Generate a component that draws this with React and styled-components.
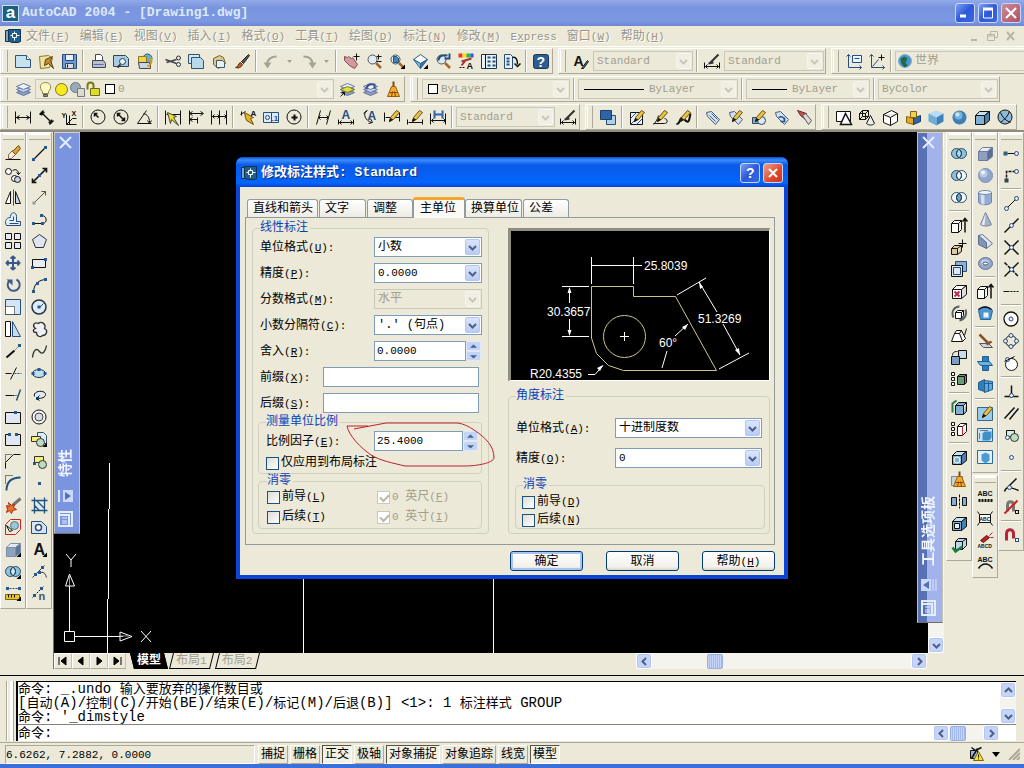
import React, { useState } from "react";
import styled, { createGlobalStyle, css } from "styled-components";

const MONO = `"Liberation Mono", "Noto Sans CJK SC", monospace`;
const FACE = "#ece9d8";
const SHADOW = "#aca899";

const GlobalStyle = createGlobalStyle`
  * { box-sizing: border-box; }
  body { margin: 0; background: ${FACE}; font: 12px/14px ${MONO}; color: #000; }
  button, input, select { font: inherit; color: inherit; margin: 0; padding: 0; }
  svg { display: block; flex: none; }
`;

const Latin = styled.span`
  font-size: 11px;
`;

// "&" marks the access key, as in Windows resource files
function Caption({ text }) {
  return text.split(/([ -~]+)/).map((part, i) =>
    i % 2 ? (
      <Latin key={i}>{part.split(/&(.)/).map((p, j) => (j % 2 ? <u key={j}>{p}</u> : p))}</Latin>
    ) : (
      part
    )
  );
}

/* ---------- icons ---------- */

const cube = (front, top, side) => (
  <>
    <path d="M1 6h9v9H1z" fill={front} />
    <path d="M1 6l4-4h10l-5 4z" fill={top} />
    <path d="M10 6l5-4v9l-5 4z" fill={side} />
  </>
);
const wire = cube("#fff", "#fff", "#ddd");
const blueCube = cube("#7fb0d6", "#c8e2f4", "#4b7fae");
const rings = (a, b, c) => (
  <>
    <circle cx="5" cy="8" r="5" fill={a} stroke="none" />
    <circle cx="10" cy="8" r="5" fill={b} stroke="none" />
    <path d="M7.500 3.700a5 5 0 0 1 0 8.600a5 5 0 0 1 0-8.600z" fill={c} />
    <g stroke="#24506e">
      <circle cx="5" cy="8" r="5" />
      <circle cx="10" cy="8" r="5" />
    </g>
  </>
);
const pencil = (
  <g>
    <path d="M5 12l1-4 6-7 3 2-6 7z" fill="#e8c34a" stroke="#6b4c12" />
    <path d="M5 12l1-3 2 1z" fill="#222" />
  </g>
);
const dot = (x, y) => <rect x={x - 1.5} y={y - 1.5} width="3" height="3" fill="#245a94" stroke="none" />;
const ring = (x, y, r = 2) => <circle cx={x} cy={y} r={r} fill="#e3edf7" stroke="#2d4a78" />;
const corner = <path d="M15.500 11v4.500H11z" fill="#000" stroke="none" />;
const letter = (t, x, y, size = 12, fill = "#111") => (
  <text x={x} y={y} fontSize={size} fill={fill} stroke="none" fontFamily="Liberation Sans, sans-serif" fontWeight="bold">{t}</text>
);
const lens = (
  <>
    <path d="M9.500 9.500l5 5" stroke="#a5682a" strokeWidth="2.500" />
    <circle cx="6" cy="6" r="4.500" fill="#dcebf5" stroke="#555" />
  </>
);
const stack = (
  <>
    <path d="M1 11l7 3 7-3-7-3z" fill="#8fa0c8" stroke="#6273a0" />
    <path d="M1 8l7 3 7-3-7-3z" fill="#c8d2ea" stroke="#6273a0" />
    <path d="M1 5l7 3 7-3-7-3z" fill="#eef2fb" stroke="#6273a0" />
  </>
);
const broom = (
  <>
    <path d="M8 0v6" stroke="#7a4a10" strokeWidth="2" />
    <path d="M6 5h4l4 10H2z" fill="#f0ad27" stroke="#9a5d0c" />
    <path d="M4 11h8M6 15l1-5M10 15l-1-5" stroke="#9a3d0c" />
  </>
);
const tag = <path d="M2 3l5-1 8 8-4 5-8-8z" fill="#cfe0ee" stroke="#48607e" />;
const sphere = (
  <>
    <circle cx="8" cy="8" r="7" fill="#8fa6cc" stroke="#7b8fb5" />
    <circle cx="6" cy="6" r="4" fill="#b9c8e4" stroke="none" />
    <circle cx="5.500" cy="5" r="2" fill="#eff4fc" stroke="none" />
  </>
);

const ICONS = {
  new: <><path d="M0 2h11l4 4v8H0z" fill="#c6e2ee" stroke="#2e5575" /><path d="M11 2v4h4" fill="#fff" stroke="#2e5575" /></>,
  open: <><path d="M1 3l9-1 4 3-3 9-9 1z" fill="#f0e3a0" stroke="#8d7a38" /><path d="M7 6l7-3-2 4 3 8-5-5-4 2z" fill="#c18a2c" stroke="#5a4012" /></>,
  save: <><path d="M1 1h14v14H1z" fill="#6f9bd0" stroke="#294a7c" /><path d="M4 1h8v6H4z" fill="#e8eff7" stroke="#294a7c" /><path d="M4 10h8v5H4z" fill="#dcdcdc" stroke="#294a7c" /><path d="M6 11v3" /></>,
  print: <><path d="M5 7V1h5l2 2v4" fill="#fff" stroke="#445" /><path d="M2 7h11l2 3v4H2z" fill="#b9bfce" stroke="#445" /><path d="M3 11h10" stroke="#5d6cb0" /></>,
  preview: <><path d="M0 2h12l3 3v8H0z" fill="#a9cbe6" stroke="#345" /><circle cx="9" cy="8" r="3" fill="#e6f3fb" stroke="#245" /><path d="M7 11l-3 3" stroke="#333" strokeWidth="2" /></>,
  publish: <><circle cx="11" cy="5" r="4.500" fill="#62b0d8" stroke="#24607e" /><path d="M2 3h8v6H2z" fill="#f2d24b" stroke="#8d7a28" /><path d="M2 9h10l2 2v4H3z" fill="#ccd2e0" stroke="#445" /><path d="M14 4c2 4 1 7-3 9" stroke="#d59a1e" strokeWidth="2" /></>,
  cut: <><path d="M0 6l11 4M1 9l10-3" stroke="#445" strokeWidth="1.500" /><circle cx="13" cy="4.500" r="2" stroke="#234" /><circle cx="13" cy="11" r="2" stroke="#234" /></>,
  copy: <><path d="M0 1h11v9H0z" fill="#cfe6f3" stroke="#2e5575" /><path d="M3 4h9l3 3v8H3z" fill="#b8d9ea" stroke="#2e5575" /></>,
  paste: <><path d="M2 5l6-3 4 2 2 6-7 5-5-4z" fill="#d9c88a" stroke="#77622c" /><path d="M5 7h6l2 2v5H5z" fill="#e5f0f4" stroke="#456" /></>,
  brush: <><path d="M7 8l7-7 1 1-6 8z" fill="#555" stroke="#222" /><path d="M1 14c3 0 2-4 5-5l2 2c-1 3-4 4-7 3z" fill="#b2612a" stroke="#5a2c10" /></>,
  undo: <><path d="M4 11C3 6 8 3 13 3" stroke="#a5a396" strokeWidth="2" /><path d="M0 9h8l-4 6z" fill="#a5a396" stroke="none" /></>,
  redo: <><path d="M3 3c5 0 9 2 9 8" stroke="#a5a396" strokeWidth="2" /><path d="M8 9h8l-4 6z" fill="#a5a396" stroke="none" /></>,
  pan: <><path d="M1 3l3 1 1-1 3 2 1-1 5 7-3 4-5-3-5-5z" fill="#d6999b" stroke="#7d4c54" /><path d="M13 0v7M10 3h6" /></>,
  zoom: <>{lens}<path d="M12 1v5M10 3h5M10 8h5" /></>,
  zoomwin: <>{lens}<path d="M4 3h3l2 2v4H4z" fill="#4b82b8" stroke="#24507e" />{corner}</>,
  viewcube: <><path d="M1 6l7-5 7 5-7 4z" fill="#fff" stroke="#24608f" /><path d="M1 6l7 4v5z" fill="#8fc0e2" stroke="#24608f" /><path d="M15 6l-7 4v5z" fill="#3a7ab2" stroke="#24608f" />{corner}</>,
  zoomprev: <>{lens}<path d="M3 7c0-5 5-6 9-5M14 0v5h-5" stroke="#24507e" strokeWidth="2" /></>,
  props: <><path d="M0 0h4v4H0z" fill="#e33" stroke="none" /><path d="M4 0h4v4H4z" fill="#fd0" stroke="none" /><path d="M8 0h4v4H8z" fill="#2b4" stroke="none" /><path d="M12 0h3v4h-3z" fill="#35d" stroke="none" /><path d="M3 8l10-3M3 12l4-5" stroke="#a33" strokeWidth="2" />{letter("A", 8, 15, 9)}<path d="M1 14h6" strokeDasharray="2 1" /></>,
  design: <><path d="M0 1h15v14H0z" fill="#e9f1f7" stroke="#1c3350" /><path d="M4 1v14" /><path d="M6 4h3M11 4h3M6 8h3M11 8h3M6 12h3M11 12h3" stroke="#24507e" strokeWidth="2" /></>,
  palettes: <><path d="M0 1h6l2 2v12H0z" fill="#e9f1f7" stroke="#24507e" /><path d="M2 5h3M2 8h3M2 11h3" strokeWidth="2" stroke="#24507e" /><path d="M8 4c4-1 5 3 5 7M10 10l3 3 3-3" strokeWidth="1.500" /></>,
  help: <><rect x="0" y="1" width="15" height="14" rx="2" fill="#2d5c8f" stroke="#1a3860" />{letter("?", 3, 13, 14, "#fff")}</>,
  textstyle: <>{letter("A", 0, 12, 14)}<path d="M8 15l6-8 1 1-5 7z" fill="#777" /></>,
  dimstyle: <><path d="M0 9v6M15 9v6M0 13h15M3 11l-2 2 2 2M12 11l2 2-2 2" /><path d="M5 10l9-9M4 10l5-1" stroke="#333" strokeWidth="2" /></>,
  ucs: <><path d="M2 1v13h13M0 3l2-2 2 2M13 12l2 2-2 2" stroke="#24507e" /><path d="M6 2h9v7H6z" fill="#e9f4ff" stroke="#24507e" /><path d="M8 5h5" stroke="#24507e" /></>,
  ucsorigin: <><path d="M2 1v13h13M0 3l2-2 2 2M13 12l2 2-2 2M3 13l6-7" stroke="#24507e" /><path d="M12 1v6M9 4h6" /></>,
  globe: <><circle cx="7.500" cy="7.500" r="6.500" fill="#4d93c8" stroke="#7fb2da" /><path d="M3 5l4-2 3 2-2 4 2 3-3 2-3-4z" fill="#1f6a45" stroke="none" /></>,
  layers: stack,
  bulb: <><path d="M5 10C1 6 3 1 8 1s7 5 3 9v2H5z" fill="#fdf9c4" stroke="#8d8640" /><path d="M6 13h4v2H6z" fill="#888" stroke="#555" /></>,
  sun: <><circle cx="8" cy="8" r="6" fill="#f5ea1b" stroke="#77722a" /></>,
  vpsun: <><circle cx="6" cy="6" r="5" fill="#9aaab8" stroke="#667788" /><path d="M8 7h7v8H8z" fill="#dcdccc" stroke="#778" /></>,
  lock: <><path d="M2 8V4c0-4 6-4 6 0v3" stroke="#777a14" strokeWidth="2" /><path d="M5 7h9v7H5z" fill="#dedb2c" stroke="#6d6b10" /></>,
  layercur: <>{stack}<path d="M1 8l7 3 7-3-7-3z" fill="#dfe04a" stroke="#77781a" /><path d="M1 15l4-4M2 11h3v3" /></>,
  layerprev: <>{stack}<path d="M4 8c0-5 4-6 8-5v4" stroke="#3b5390" strokeWidth="2" /></>,
  broom,
  dimlinear: <path d="M0 2v12M15 2v12M0 8h15M4 6L1 8l3 2M11 6l3 2-3 2M3 7v2M12 7v2" />,
  dimaligned: <path d="M1 5l4-4M11 15l4-4M3 3l10 10M3 6V3h3M13 10v3h-3" strokeWidth="1.400" />,
  dimord: <><path d="M5 5v10h10M5 15l6-6h4M8 6v9" />{letter("X", 10, 6, 7)}{letter("Y", 0, 8, 7)}</>,
  radius: <><circle cx="7.500" cy="7.500" r="7" /><path d="M8 8L4 4M4 7V4h3" strokeWidth="1.500" /></>,
  diameter: <><circle cx="7.500" cy="7.500" r="7" /><path d="M4 4l7 7M4 7V4h3M11 8v3H8" strokeWidth="1.500" /></>,
  angle: <path d="M15 14H1L10 1M7 4c4 1 6 4 6 9M11 11l2 3 2-3" />,
  quickdim: <><path d="M0 1v14M15 1v14M1 5h14" /><path d="M2 3l9 4-3 1 5 8-7-6-1 4z" fill="#eae033" stroke="#444" /></>,
  baseline: <path d="M1 1v14M1 4h13M1 10h8M4 2L1 4l3 2M4 8l-3 2 3 2M9 8v6M12 2l3 2-3 2" />,
  contin: <path d="M0 1v14M8 1v14M15 1v14M1 7h14M3 5L1 7l2 2M6 5l2 2-2 2M13 5l2 2-2 2" />,
  leader: <><path d="M0 5l5-3M1 6V2" /><path d="M4 3l9 5-3 1 3 6-7-4-1-3z" fill="#e3b52a" stroke="#6d5010" />{letter("A", 10, 6, 8)}</>,
  tolerance: <><path d="M0 3h15v10H0zM8 3v10" fill="#dceaf6" stroke="#24507e" /><circle cx="4" cy="8" r="2" stroke="#24507e" />{letter(".1", 8, 11, 8, "#24507e")}</>,
  center: <><circle cx="7.500" cy="7.500" r="7" /><path d="M8 5v6M5 8h6" strokeWidth="2" /></>,
  oblique: <path d="M1 15L5 1M11 15l4-14M3 8h10M5 6L3 8l2 2M11 6l2 2-2 2" />,
  dimtext: <>{letter("A", 3, 9, 12, "#234f8a")}<path d="M0 10v5M15 10v5M1 13h14M3 11l-2 2 2 2M12 11l2 2-2 2" /></>,
  dimrot: <>{letter("A", 6, 10, 12, "#234f8a")}<path d="M5 1C1 5 4 11 10 13M2 4l4-3M7 14l4-1-2-4" /></>,
  dimedit: <><path d="M0 3v9M15 3v9M1 8h14" />{pencil}</>,
  dimpencil: <><path d="M0 10v5M15 10v5M1 13h14" />{pencil}</>,
  dimupdate: <><path d="M0 4v11M15 4v11M1 11h14M3 9l-2 2 2 2M13 9l2 2-2 2" /><path d="M4 1v8M12 1v8M4 5h8" stroke="#2c66ad" strokeWidth="2" /></>,
  order: <><path d="M6 6h9v9H6z" fill="#b3d0e8" stroke="#24507e" /><path d="M0 1h11v9H0z" fill="#2f65a5" stroke="#1b3d68" /></>,
  hatchedit: <><path d="M1 3h12v12H1z" fill="#e7f2fb" /><path d="M1 9l6-6M1 15L13 3M7 15l6-6" stroke="#24507e" />{pencil}</>,
  pedit: <><path d="M1 15c2-2 4-5 5-9M1 14h11c4 0 3-5 0-5" />{pencil}</>,
  splineedit: <><path d="M1 14c4 2 3-10 8-4s5-2 6-6" strokeWidth="2" />{pencil}</>,
  tag: <>{tag}<path d="M5 6l6 6M7 4l6 6" stroke="#48607e" /></>,
  tagedit: <>{tag}{pencil}</>,
  tagshape: <><path d="M2 8h7v6H2z" fill="#7fb0d6" stroke="#345" /><circle cx="11" cy="11" r="4" fill="#dceaf6" stroke="#345" />{pencil}</>,
  tagsync: <>{tag}<path d="M5 8c3-2 6 0 6 3M11 8v4H7" stroke="#234f8a" strokeWidth="1.500" /></>,
  tagarrow: <><path d="M1 1l9 3-3 1 2 5-5-4z" fill="#b55" stroke="#6a2b2b" /><path d="M6 6l3-2 6 7-3 4z" fill="#ddd" stroke="#555" /></>,
  wf2d: <><path d="M0 2h14v10H0z" fill="#fff" /><path d="M9 4l6 11H4z" fill="#fff" strokeWidth="1.500" /></>,
  wf3d: <><path d="M0 4h6v6H0zM3 1h6v6H3zM0 4l3-3M6 4l3-3M0 10l3-3M6 10l3-3" /><path d="M11 6l4 8c-2 2-6 2-8 0z" fill="#eee" /></>,
  hidden: <path d="M1 5l8-4 6 3v8l-7 4-7-3zM1 5l7 3 7-4M8 8v8" fill="#fff" />,
  shadebox: <><path d="M1 7l7 2v6l-7-2z" fill="#e9a820" stroke="#865f10" /><path d="M8 9l7-3v6l-7 3z" fill="#2f65a5" stroke="#1b3d68" /><path d="M5 2h6v6H5z" fill="#f2d24b" stroke="#865f10" /></>,
  flat: <g stroke="none"><path d="M0 4l8-3 7 3-7 4z" fill="#b7dcf3" /><path d="M0 4l8 4v8l-8-4z" fill="#6caedb" /><path d="M15 4L8 8v8l7-4z" fill="#3c83ba" /></g>,
  gouraud: <g stroke="none"><circle cx="8" cy="8" r="7" fill="#3f7fb5" /><circle cx="7" cy="6" r="4" fill="#79b3da" /><circle cx="6" cy="5" r="2" fill="#cde8f8" /></g>,
  flatedge: blueCube,
  gouraudedge: <><circle cx="7.500" cy="7.500" r="7" fill="#8dbadb" /><path d="M3 3c2 5 5 8 10 10M12 2c-2 5-5 8-9 11" /></>,

  erase: <><path d="M0 14h15" /><path d="M3 9l4-4 3 4-4 4H3z" fill="#f7ead9" stroke="#865" /><path d="M7 6l6-6 2 3-5 6z" fill="#d7a62b" stroke="#6b4c12" /></>,
  copyobj: <><circle cx="3" cy="4" r="3" fill="#fff" /><circle cx="9" cy="11" r="3" fill="#fff" /><circle cx="12" cy="12" r="3" fill="#c8d2ea" /><path d="M7 3c4-2 6 0 6 4M11 5l2 2 2-2" /></>,
  mirror: <><path d="M5 2v12H0z" fill="#fff" /><path d="M10 2v12h5z" fill="#c8d2ea" /><path d="M8 0v16" stroke="#24507e" /></>,
  offset: <><path d="M1 14h14v-4h-4V5c0-5-6-5-6 0v1c-5 0-6 5-4 8z" fill="#e1effa" stroke="#24507e" /><path d="M4 12h9M4 9h4V5" stroke="#24507e" /></>,
  array: <path d="M0 0h6v6H0zM9 0h6v6H9zM0 9h6v6H0zM9 9h6v6H9z" fill="#e5e9f5" />,
  move: <path d="M7.500 1v13M1 7.500h13M5 3l2.500-2L10 3M5 12l2.500 2 2.500-2M3 5L1 7.500 3 10M12 5l2 2.500-2 2.500" stroke="#3b5a8c" strokeWidth="2" />,
  rotate: <><path d="M11 2a6 6 0 1 1-7 1" stroke="#3b5a8c" strokeWidth="2" /><path d="M1 2h6v6z" fill="#3b5a8c" stroke="none" /></>,
  scale: <><path d="M0 0h15v15H0z" fill="#d5e4f4" stroke="#24507e" /><path d="M0 7h9v8H0z" fill="#fff" strokeDasharray="1 1" /></>,
  stretch: <><path d="M0 0h5v15H0z" fill="#fff" /><path d="M7 0l8 15H7z" fill="#c6dcef" stroke="#24507e" /></>,
  lengthen: <><path d="M1 14L9 7" strokeWidth="2" /><path d="M9 7l6-6" stroke="#8a7cb5" />{dot(14, 2)}</>,
  trim: <><path d="M0 8h6M5 14L11 2" /><path d="M9 8h7" strokeDasharray="2 1" stroke="#24507e" /></>,
  extend: <><path d="M0 8h7" /><path d="M7 8h4" strokeDasharray="2 1" /><path d="M11 13l4-11" stroke="#24507e" strokeWidth="1.500" /></>,
  breakpt: <><path d="M0 3h15v11H0z" fill="#e1e6f3" />{dot(10, 3)}</>,
  breakobj: <><path d="M4 3H0v11h15V3h-4" fill="#e1e6f3" />{dot(4, 3)}{dot(11, 3)}</>,
  chamfer: <><path d="M0 15V9l8-8h7" /><path d="M0 8V1h7" strokeDasharray="1 1" /></>,
  fillet: <><path d="M1 15C1 6 6 2 15 2" stroke="#24507e" strokeWidth="2" /><path d="M0 8V0h7" strokeDasharray="1 1" /></>,
  explode: <><path d="M7 8l8-7" stroke="#777" strokeWidth="3" /><path d="M1 8l3 1-1-4 3 3 3-1-1 3 3 2-4 1-1 3-2-3-3 2 1-3z" fill="#ef7128" stroke="#a22a10" /></>,
  refedit: <><path d="M0 5l5-5h10v10l-5 5H0z" stroke="#c22" /><circle cx="9" cy="6" r="4" fill="#9cc5dd" stroke="#577" /><path d="M1 6l6 5-3 1z" fill="#fff" /></>,
  solids: <><g stroke="#7d8eaa">{cube("#8fa3bf", "#e1e9f3", "#5c7698")}</g>{corner}</>,
  boolean: <>{rings("#8fbfd9", "#8fbfd9", "#d4e9f4")}{corner}</>,
  measure: <><path d="M1 3h14" strokeDasharray="2 1" stroke="#24507e" />{dot(2, 3)}{dot(14, 3)}<path d="M0 9h14v5H0z" fill="#e6c52f" stroke="#7a6410" /><path d="M3 9v3M6 9v3M9 9v3" />{corner}</>,

  line: <><path d="M2 14L14 2" strokeWidth="1.300" />{dot(2, 14)}{dot(14, 2)}</>,
  xline: <><path d="M1 15L15 1M1 11v4h4M15 5V1h-4" strokeWidth="1.600" />{dot(8, 8)}</>,
  mline: <><path d="M2 14L14 2M10 2h4v4" stroke="#555" /><rect x="1" y="12" width="3" height="3" fill="#999" stroke="none" /></>,
  pline: <><path d="M2 12h9c5 0 5-8-1-8" />{dot(2, 12)}{dot(11, 12)}{dot(10, 4)}</>,
  polygon: <path d="M8 1l7 5-3 8H4L1 6z" fill="#dfe4ee" stroke="#234" />,
  rectangle: <><path d="M1 4h13v8H1z" fill="#e8edf5" />{dot(1, 12)}{dot(14, 4)}</>,
  arc: <><path d="M2 15C2 7 7 2 15 2" />{dot(2, 14)}{dot(6, 6)}{dot(14, 2)}</>,
  circle: <><circle cx="7.500" cy="7.500" r="7" fill="#dfecf5" stroke="#234" strokeWidth="1.500" /><path d="M8 8l4-4" stroke="#24507e" />{dot(7.5, 7.5)}</>,
  cloud: <path d="M4 7C0 4 3 0 7 2c3-3 8 1 6 5 4 2 2 7-2 7-2 2-6 1-6-3-4 0-4-3-1-4z" fill="#eef1f7" stroke="#333" strokeWidth="1.300" />,
  spline: <path d="M1 14C2 6 5 4 8 8s6 0 7-6" stroke="#333" strokeWidth="1.300" />,
  ellipse: <><ellipse cx="7.500" cy="8" rx="6.500" ry="4" fill="#bddcf0" stroke="#234" />{dot(1.5, 8)}{dot(13.5, 8)}{dot(7.5, 4)}</>,
  ellarc: <><path d="M3 9C1 3 14 2 14 7c0 3-4 4-8 4" fill="#dfecf5" />{dot(6, 11)}<path d="M8 8l-3 3 3 2" /></>,
  donut: <><circle cx="7.500" cy="7.500" r="7" fill="#f5f5f5" /><circle cx="7.500" cy="7.500" r="4" fill="#dcdce4" stroke="#444" /></>,
  insblock: <><path d="M6 1h6l3 3v8H6z" fill="#dcedf5" stroke="#356" /><path d="M0 5h9v5H0z" fill="#f5ee7a" stroke="#333" /><circle cx="9" cy="11" r="4" fill="#bcdcc0" stroke="#333" />{corner}</>,
  mkblock: <><path d="M3 3h9v6H3z" fill="#f5ee7a" stroke="#333" /><circle cx="11" cy="11" r="4" fill="#bcdcc0" stroke="#333" />{dot(3, 10)}</>,
  point: dot(8, 8),
  hatch: <><path d="M3 3h10v10H3z" fill="#dcedf7" /><path d="M0 3h16M0 13h16M3 0v16M13 0v16M3 8l5 5M5 3l8 8" stroke="#24507e" strokeWidth="1.300" /></>,
  region: <><path d="M0 2h10l5 5v7H0z" fill="#d9e4ee" stroke="#24507e" /><circle cx="7" cy="8" r="3" fill="#fff" stroke="#24507e" strokeWidth="1.500" /></>,
  mtext: <>{letter("A", 2, 13, 16)}{corner}</>,
  divide: <><path d="M1 14L13 2M9 9c4-1 5 2 6 5" stroke="#333" />{dot(4, 11)}{dot(11, 4)}{dot(8, 9)}</>,
  measuren: <><path d="M1 12L12 1" strokeDasharray="2 1" />{dot(3, 10)}{dot(10, 3)}{letter("n", 7, 14, 11, "#456")}</>,

  union: rings("#8fbfd9", "#8fbfd9", "#b6d8e9"),
  subtract: rings("#8fbfd9", "#f4f8fb", "#f4f8fb"),
  intersect: rings("#f4f8fb", "#f4f8fb", "#6ea9cb"),
  extrude: <><path d="M0 6h7v9H0zM0 6l3-3h7L7 6M10 3v9l-3 3" fill="#fff" /><path d="M13.500 15V2M11 4l2.500-3L16 4" strokeWidth="1.500" /></>,
  movef: <><path d="M0 9h6v6H0zM0 9l3-3h7L6 9M10 6v6l-4 3" fill="#d9c9a0" /><path d="M11 0v8M7 4h8" /></>,
  offsetf: <><path d="M4 0h11v10H4z" fill="#8eb0d8" stroke="#24507e" /><path d="M0 4h11v11H0z" fill="#dfe9f4" /><path d="M2 6h7v7H2z" stroke="#24507e" /></>,
  deletef: <>{wire}<path d="M3 8l5 5M8 8l-5 5" stroke="#c2264a" strokeWidth="2" /></>,
  rotatef: <><path d="M4 7h6v6H4zM4 7l2-2h6l-2 2M12 5v5l-2 3" fill="#fff" /><path d="M2 12C-1 6 3 1 8 1M14 4c2 5-1 10-6 11" stroke="#566" strokeWidth="2" /></>,
  taperf: <><path d="M0 14l3-8h5l3 8zM3 6l2-3h5L8 6M10 3l4 8-3 3" fill="#fff" /><path d="M13 8l2-7" /></>,
  copyf: <><path d="M7 1h8v8H7z" fill="#c8dbea" /><path d="M0 7h8v8H0z" fill="#7d9cc4" /><path d="M1 6c0-4 3-4 5-4" /></>,
  colorf: <><path d="M6 5l2-2h7v8l-2 2H6zM6 5h7v8M13 5l2-2" fill="#6a9c77" /><path d="M0 1h3v3H0zM0 6h3v3H0zM0 11h3v3H0z" fill="#fff" /></>,
  copyedge: <><path d="M4 6h8v9H4zM4 6l3-3h8l-3 3M15 3v9l-3 3" fill="#7fb0d6" /><path d="M1 13V4l4-3" stroke="#2b7b4b" strokeWidth="2" /></>,
  coloredge: <><path d="M6 5l3-3h6v8l-4 4H6zM6 5h5M11 5l4-3" fill="#fff" /><path d="M11 5v9" stroke="#c22" /><path d="M0 1h3v3H0zM0 6h3v3H0zM0 11h3v3H0z" fill="#fff" /></>,
  imprint: <>{blueCube}<circle cx="5.500" cy="10.500" r="3" stroke="#fff" /></>,
  clean: <><path d="M0 5h11v9H0z" fill="#c4d3e2" stroke="#889" />{broom}</>,
  separate: <><path d="M0 4h5v8H0zM11 4h4v8h-4z" fill="#7fb0d6" /><path d="M8 1v14" strokeDasharray="3 1" /></>,
  shell: <>{blueCube}<path d="M3 8h5v5H3z" fill="#e4f0f8" /></>,
  check: <><path d="M4 4l3-3h8v7l-4 4H4z" fill="#bcd9ec" /><path d="M4 4h7v8M11 4l4-3" /><path d="M1 10l3 4 7-5" stroke="#188044" strokeWidth="2.500" /></>,

  box: <g stroke="#6c7d9c">{cube("#8fa0bf", "#e8edf5", "#5c6f92")}</g>,
  sphere,
  cylinder: <><path d="M1 3v10c2 3 11 3 13 0V3z" fill="#93abd0" stroke="#7189ad" /><path d="M3 5h4v10H4z" fill="#d3dff0" stroke="none" /><ellipse cx="7.500" cy="3" rx="6.500" ry="2" fill="#eef3fa" stroke="#7189ad" /></>,
  cone: <><path d="M8 1l6 12c-2 2-9 2-11 0z" fill="#a5b3ca" stroke="#74839c" /><path d="M8 2l-1 12-3-1z" fill="#e6ebf4" stroke="none" /></>,
  wedge: <><path d="M1 2v9l8 4V9z" fill="#8495b2" stroke="#5c6f92" /><path d="M1 2l4-1 10 9-6 5V9z" fill="#dfe5ef" stroke="#5c6f92" /></>,
  torus: <><ellipse cx="8" cy="8" rx="7" ry="6" fill="#91a8ca" stroke="#65799d" /><ellipse cx="7.500" cy="7" rx="4" ry="3" fill="#c6d3e8" stroke="none" /><ellipse cx="8" cy="8" rx="2.500" ry="1.500" fill="#f5f7fb" stroke="#456" /></>,
  revolve: <><path d="M1 5c2-5 11-5 14 0l-2 9H3z" fill="#4b96d0" stroke="#2a6597" /><path d="M6 7h5v5H6z" fill="#eaf4fb" stroke="none" /><path d="M1 4c4-3 9-3 13 0" strokeWidth="1.500" /></>,
  slice: <><path d="M2 10h9l4 4H6z" fill="#cfd4dc" stroke="#556" /><path d="M2 1l9 9M9 11l5-3" stroke="#84532a" strokeWidth="2.500" /></>,
  section: <><path d="M5 1h6v14H5z" fill="#2f7dbb" stroke="#1f5c90" /><path d="M0 6h12l3 4H3z" fill="#6cb3e4" stroke="#1f5c90" /></>,
  interfere: <g stroke="#1f5c90"><path d="M1 5l6-3v12l-6-2z" fill="#2f7dbb" /><path d="M7 3l8 1v8l-8 3z" fill="#5ea8dc" /><path d="M7 6h8M11 4v10" /></g>,
  setupdraw: <><path d="M0 2h15v13H0z" fill="#9ccbe8" stroke="#2d6a97" />{pencil}</>,
  setupview: <><path d="M0 1h15v13H0z" fill="#cbe5f4" stroke="#2d6a97" /><path d="M5 6l2-2h7v6l-2 3H5z" fill="#3f8fc8" stroke="none" /><path d="M3 3h8M2 6v6" strokeDasharray="1 1" /></>,
  setupprof: <><path d="M0 1h15v13H0z" fill="#e4f1f9" stroke="#2d6a97" /><path d="M4 5l4-2 4 2v6l-4 3-4-3z" fill="#4b9bd2" stroke="none" /></>,
  textfit: <>{letter("ABC", 0, 7, 7)}<path d="M1 12h14" strokeDasharray="2 1" strokeWidth="3" /></>,
  textmask: <><path d="M2 4h11v8H2zM2 4L0 1M13 4l2-3M2 12l-2 3M13 12l2 3" fill="#fff" />{letter("ABC", 2, 10, 5)}</>,
  textexplode: <><path d="M3 8l6-5 3 2-6 5z" fill="#b22" stroke="#611" /><path d="M12 3l3-3M13 5h3" stroke="#b22" />{letter("ABCD", 0, 15, 5)}</>,
  arctext: <>{letter("ABC", 0, 7, 7)}<path d="M1 14c4-6 10-6 14 0" strokeWidth="1.500" /></>,

  trackpt: <><path d="M4 8h8" />{ring(13, 8)}<rect x="0" y="6" width="4" height="4" fill="#345f7a" stroke="none" /></>,
  snapfrom: <><path d="M12 4H3v9" strokeDasharray="3 1" strokeWidth="1.500" />{ring(13, 4)}<rect x="1" y="11" width="4" height="4" fill="#345" stroke="none" /></>,
  endpt: <><path d="M3 13L13 3" />{ring(3, 13)}{ring(13, 3)}</>,
  midpt: <><path d="M1 15L15 1" strokeWidth="1.500" />{ring(8, 8)}</>,
  inter: <><path d="M1 1l14 14M15 1L1 15" strokeWidth="1.500" />{ring(8, 8)}</>,
  appint: <><path d="M1 1l14 14" strokeDasharray="4 1" strokeWidth="1.500" /><path d="M15 1L1 15" strokeWidth="1.500" />{ring(8, 8)}</>,
  ext: <><path d="M0 8h6" /><path d="M7 8h9" strokeDasharray="2 1" /></>,
  centerp: <><circle cx="7.500" cy="7.500" r="7" fill="#fff" strokeWidth="1.300" />{ring(7.5, 7.5)}</>,
  quadrant: <><circle cx="7.500" cy="7.500" r="5.500" />{ring(7.5, 2)}{ring(7.5, 13)}{ring(2, 7.5)}{ring(13, 7.5)}</>,
  tangent: <><circle cx="8" cy="9" r="6" fill="#fff" />{ring(4, 4)}<path d="M1 6l10-5" /></>,
  perp: <><path d="M8 2v10M1 13h14" strokeWidth="1.500" />{ring(8, 12)}</>,
  parallel: <path d="M1 13L11 2M6 14l9-11" strokeWidth="1.500" />,
  insert: <><path d="M3 3h8v6H3z" fill="#dfeadf" /><circle cx="11" cy="10" r="4" fill="#bcdcc0" stroke="#333" />{ring(4, 10)}</>,
  node: ring(8, 8),
  nearest: <><path d="M1 14c2-6 7-4 14-1M5 9l8-8" strokeWidth="1.500" />{ring(6, 10)}</>,
  snapnone: <><path d="M4 12V6c0-5 6-5 6 0v6" stroke="#777" strokeWidth="3" /><path d="M1 14L14 1" stroke="#c22" strokeWidth="2" /><rect x="12" y="11" width="3" height="3" /></>,
  snapset: <><path d="M3 13V6c0-5 7-5 7 0v5" stroke="#b5263c" strokeWidth="3" /><rect x="12" y="11" width="3" height="3" fill="#fff" stroke="#234f8a" /></>,

  acad: <><path d="M0 2h8v11H0z" fill="#7fa3c0" stroke="#0f3358" /><path d="M3 1h12v12l-2 1H6l-3-2z" fill="#1c5f8c" stroke="#0f3358" /><path d="M9 3v9M5 7h9" stroke="#fff" /><path d="M7 5h4v4H7z" fill="#1c5f8c" stroke="#fff" /></>,
  tray: <><path d="M2 4h7v8H2z" fill="#9ab0d8" /><path d="M3 12l6-10M3 1l4 3 6-3" strokeWidth="1.500" /><path d="M10 5l5 9H5z" fill="#f7e135" stroke="#75680e" /><path d="M10 8v3M10 12v1" /></>,
};

// half-pixel origin keeps the one-pixel strokes sharp
function Icon({ name, size = 16 }) {
  return (
    <svg width={size} height={size} viewBox="-0.5 -0.5 16 16" fill="none" stroke="#111" overflow="visible" aria-hidden="true">
      {ICONS[name]}
    </svg>
  );
}

/* ---------- application frame ---------- */

const Desktop = styled.div`
  position: relative;
  display: flex;
  flex-direction: column;
  min-height: 100vh;
  overflow: hidden;
`;

const TitleBar = styled.header`
  display: flex;
  align-items: center;
  gap: 3px;
  height: 26px;
  padding: 0 3px 0 2px;
  background: linear-gradient(#92aaea, #7994dd 30%, #7d99e3 80%, #6d86d2);
`;

const Logo = styled.span`
  width: 17px;
  height: 17px;
  border: 1px solid #c9e0ec;
  background: #19617f;
  color: #fff;
  font: bold 17px/13px "Liberation Sans", sans-serif;
  text-align: center;
`;

const AppTitle = styled.h1`
  flex: 1;
  margin: 0;
  color: #dce9fb;
  font-size: 13px;
  line-height: 18px;
`;

const WindowButton = styled.button`
  display: grid;
  place-items: center;
  width: 20px;
  height: 20px;
  border: 1px solid #c9d6f7;
  border-radius: 3px;
  background: ${(p) =>
    p.$tone === "red" ? "linear-gradient(135deg, #f0a08a, #e0482a 60%, #c83718)" :
    p.$tone === "dim" ? "linear-gradient(135deg, #cc8a98, #b0525f)" :
    "linear-gradient(135deg, #7f9ff2, #2d59d9 50%, #3a68e0)"};
`;

const MenuBar = styled.nav`
  display: flex;
  align-items: center;
  height: 21px;
  padding: 0 6px 0 5px;
  color: #98958a;
  border-bottom: 1px solid #fff;
`;

const MenuItem = styled.button`
  padding: 1px 5px 0;
  border: 0;
  background: none;
  text-shadow: 1px 1px #fff;
`;

const MdiButtons = styled.div`
  display: flex;
  gap: 4px;
  margin-left: auto;
`;

const MdiButton = styled.button`
  padding: 1px;
  border: 0;
  background: none;
`;

const Toolbars = styled.div`
  display: flex;
  flex-direction: column;
  gap: 2px;
  padding-top: 1px;
`;

const ToolRow = styled.div`
  display: flex;
  gap: 5px;
  height: 26px;
`;

const ToolGroup = styled.div`
  display: flex;
  align-items: center;
  flex: ${(p) => (p.$grow ? 1 : "none")};
  border: 1px solid;
  border-color: #fff ${SHADOW} ${SHADOW} #fff;
  ${(p) => p.$vertical && css`
    flex-direction: column;
    width: 26px;
    padding-bottom: 4px;
  `}
`;

const Grip = styled.span`
  flex: none;
  border: 1px solid;
  border-color: #fff ${SHADOW} ${SHADOW} #fff;
  ${(p) => p.$vertical
    ? css`width: 21px; height: 6px; margin: 1px 0 2px; border-width: 1px 0; box-shadow: 0 -2px #fff;`
    : css`width: 6px; height: 22px; margin: 0 3px 0 1px; border-width: 0 1px;`}
`;

const ToolButton = styled.button`
  display: grid;
  place-items: center;
  flex: none;
  width: 23px;
  height: 22px;
  border: 0;
  background: none;
`;

const DropButton = styled(ToolButton)`
  width: 14px;
`;

const Separator = styled.span`
  flex: none;
  border: 1px solid;
  border-color: ${SHADOW} #fff #fff ${SHADOW};
  ${(p) => p.$vertical
    ? css`width: 20px; height: 2px; margin: 2px 0; border-width: 1px 0;`
    : css`width: 2px; height: 22px; margin: 0 2px; border-width: 0 1px;`}
`;

function Tools({ names, vertical }) {
  return names.split(" ").map((name, i) => {
    if (name === "|") return <Separator key={i} $vertical={vertical} />;
    if (name === "drop") {
      return (
        <DropButton key={i} aria-label="more">
          <svg width="5" height="3"><path d="M0 0h5L2.500 3z" fill="#a5a396" /></svg>
        </DropButton>
      );
    }
    return <ToolButton key={i} aria-label={name}><Icon name={name} /></ToolButton>;
  });
}

/* ---------- form controls ---------- */

const ComboFrame = styled.span`
  display: flex;
  align-items: center;
  flex: 0 0 ${(p) => p.$width}px;
  height: 20px;
  padding: 1px;
  border: 1px solid ${(p) => (p.$disabled ? "#cac7b8" : "#7f9db9")};
  background: ${(p) => (p.$disabled ? FACE : "#fff")};
  ${ToolGroup} & { margin: 0 1px; }
`;

const Select = styled.select`
  appearance: none;
  flex: 1;
  min-width: 0;
  height: 16px;
  padding: 1px 0 0 2px;
  border: 0;
  background: none;
  font-size: ${(p) => (p.$latin ? 11 : 12)}px;
  line-height: 15px;
  opacity: 1;
  &:disabled { color: #a19e90; }
`;

const Arrow = styled.span`
  display: grid;
  place-items: center;
  flex: none;
  width: 15px;
  height: 16px;
  border: 1px solid ${(p) => (p.$disabled ? "#f6f4ee" : "#b4c5ee")};
  border-radius: 2px;
  background: ${(p) => (p.$disabled ? "#f1efe4" : "linear-gradient(#dbe5fd, #b8ccf6)")};
`;

const TURNS = { down: 0, up: 180, left: 90, right: 270 };

function Chevron({ dir = "down", disabled, small }) {
  return (
    <svg width={small ? 7 : 9} height={small ? 7 : 9} viewBox="0 0 9 9" aria-hidden="true">
      {small ? (
        <path d="M0 3h9L4.500 7z" fill="#4d6185" transform={`rotate(${TURNS[dir]} 4.5 4.5)`} />
      ) : (
        <path d="M1 3l3.500 3.500L8 3" fill="none" strokeWidth="2" stroke={disabled ? "#c9c7ba" : "#4d6185"} transform={`rotate(${TURNS[dir]} 4.5 4.5)`} />
      )}
    </svg>
  );
}

function Combo({ width, value, disabled, latin, children, ...rest }) {
  return (
    <ComboFrame $width={width} $disabled={disabled}>
      {children}
      <Select disabled={disabled} $latin={latin} defaultValue={value} aria-label={value} {...rest}>
        <option>{value}</option>
      </Select>
      <Arrow $disabled={disabled}><Chevron disabled={disabled} /></Arrow>
    </ComboFrame>
  );
}

const Swatch = styled.i`
  flex: none;
  width: 10px;
  height: 10px;
  margin: 0 1px 0 4px;
  border: 1px solid #000;
  background: #fff;
`;

const LineSample = styled.i`
  flex: none;
  width: ${(p) => p.$width}px;
  height: 1px;
  margin: 0 3px 0 4px;
  background: #000;
`;

const TextBox = styled.input`
  width: ${(p) => p.$width}px;
  height: 20px;
  padding: 0 2px;
  border: 1px solid #7f9db9;
  background: #fff;
  font-size: 11px;
`;

const Spinner = styled.span`
  display: flex;
  flex-direction: column;
`;

const SpinButton = styled.button`
  display: grid;
  place-items: center;
  width: 15px;
  height: 10px;
  border: 1px solid #dfe8fc;
  border-radius: 2px;
  background: #c2d3f8;
`;

function NumberBox({ id, width, initial }) {
  const [value, setValue] = useState(initial);
  const step = (d) => setValue((v) => (Number(v) + d).toFixed(4));
  return (
    <>
      <TextBox id={id} $width={width} value={value} onChange={(e) => setValue(e.target.value)} />
      <Spinner>
        <SpinButton aria-label="increase" onClick={() => step(1)}><Chevron dir="up" small /></SpinButton>
        <SpinButton aria-label="decrease" onClick={() => step(-1)}><Chevron small /></SpinButton>
      </Spinner>
    </>
  );
}

const CheckLabel = styled.label`
  display: flex;
  align-items: center;
  gap: 2px;
  height: 14px;
  white-space: pre;
  color: ${(p) => (p.$disabled ? "#a19e90" : "#000")};
`;

const CheckBox = styled.input`
  appearance: none;
  width: 13px;
  height: 13px;
  border: 1px solid #1c5180;
  background: linear-gradient(135deg, #dcdcd7, #fff);
  &:disabled { border-color: #cac8bb; background: #fff; }
  &:checked::after {
    content: "";
    display: block;
    width: 7px;
    height: 4px;
    margin: 2px;
    border: solid #b8b5a5;
    border-width: 0 0 2px 2px;
    transform: rotate(-45deg);
  }
`;

function Check({ text, disabled, checked }) {
  return (
    <CheckLabel $disabled={disabled}>
      <CheckBox type="checkbox" disabled={disabled} defaultChecked={checked} />
      <span><Caption text={text} /></span>
    </CheckLabel>
  );
}

/* ---------- workspace ---------- */

const Workspace = styled.main`
  display: flex;
  align-items: stretch;
  flex: 1;
  padding-bottom: 6px;
  border-top: 2px solid #8f8d80;
`;

const ToolColumn = styled.aside`
  display: flex;
  flex-direction: column;
  flex: none;
  gap: 2px;
  width: 26px;
`;

const Stage = styled.section`
  display: flex;
  flex-direction: column;
  flex: 1;
  min-width: 0;
  margin: 0 2px 0 1px;
  border-left: 1px solid #716f64;
`;

const Viewport = styled.div`
  position: relative;
  display: flex;
  flex: 1;
`;

const Canvas = styled.svg`
  flex: 1;
  width: 0;
  background: #000;
`;

const ScrollTrack = styled.div`
  display: flex;
  justify-content: space-between;
  align-items: center;
  flex-direction: ${(p) => (p.$vertical ? "column" : "row")};
  flex: ${(p) => (p.$length ? `0 0 ${p.$length}px` : "none")};
  margin-right: ${(p) => (p.$vertical ? 0 : 17)}px;
  background: #f4f3ee;
`;

const ScrollButton = styled.button`
  display: grid;
  place-items: center;
  width: 16px;
  height: 16px;
  border: 1px solid #fff;
  border-radius: 3px;
  background: #c6d4fa;
  box-shadow: inset 0 0 0 1px #b3c5f2;
`;

const Thumb = styled.span`
  width: 16px;
  height: 15px;
  margin: 0 auto 0 ${(p) => p.$offset || 0}px;
  border: 1px solid #98b1e4;
  border-radius: 2px;
  background: repeating-linear-gradient(90deg, #c6d4fa 0 1px, #a4b9ec 1px 2px);
`;

const Palette = styled.div`
  position: absolute;
  top: 0;
  ${(p) => p.$side}: ${(p) => (p.$side === "left" ? 0 : 1)}px;
  display: flex;
  flex-direction: column;
  align-items: center;
  gap: 8px;
  width: 26px;
  height: ${(p) => p.$height}px;
  padding: 3px 3px 6px 0;
  border: 1px solid;
  border-color: #d5d2c4 #c5c2b4 #716f64;
  background: ${(p) => (p.$side === "left" ? "#7b94e0" : "linear-gradient(90deg, #5870b4 9px, #a2b3ec 9px)")};
`;

const PaletteTitle = styled.span`
  margin: auto 0 4px;
  color: #f0f5ff;
  font-size: 14px;
  font-weight: bold;
  line-height: 16px;
  writing-mode: vertical-rl;
  text-orientation: sideways;
  transform: rotate(180deg);
`;

const PaletteButton = styled.button`
  padding: 0;
  border: 0;
  background: none;
`;

function FloatingPalette({ side, height, title }) {
  const left = side === "left";
  return (
    <Palette $side={side} $height={height}>
      <PaletteButton aria-label="close">
        <svg width="13" height="13"><path d="M1 1l11 11M12 1L1 12" stroke="#e3eeff" strokeWidth="2" /></svg>
      </PaletteButton>
      <PaletteTitle>{title}</PaletteTitle>
      <PaletteButton aria-label="auto-hide">
        <svg width="16" height="14">
          <path d={left ? "M1 1v12" : "M15 1v12M12 1v12"} stroke="#dce8ff" strokeWidth={left ? 2 : 1} />
          <path d={left ? "M5 1h10v12H5z" : "M0 1h10v12H0z"} fill="#c9d8fb" />
          <path d={left ? "M7 3l6 4-6 4z" : "M8 3L2 7l6 4z"} fill="#5470b8" />
        </svg>
      </PaletteButton>
      <PaletteButton aria-label="properties">
        <svg width="16" height="16" fill="none" stroke="#e3edff">
          <path d="M1 1h13v14H1zM1 4h10v11" strokeWidth="2" /><path d="M4 7h5M4 10h5M4 12h5" />
        </svg>
      </PaletteButton>
    </Palette>
  );
}

const LayoutBar = styled.div`
  display: flex;
  height: 16px;
`;

const NavButton = styled.button`
  display: grid;
  place-items: center;
  width: 18px;
  border: 1px solid;
  border-color: #fff #c5c2b4 ${SHADOW} #fff;
  background: ${FACE};
`;

const LayoutTabs = styled.div`
  display: flex;
  flex: 1;
  padding-left: 4px;
`;

const LayoutTab = styled.button`
  position: relative;
  z-index: 0;
  padding: 0 7px;
  margin-right: 1px;
  border: 0;
  background: none;
  color: ${(p) => (p.$active ? "#fff" : "#a19e90")};
  font-weight: ${(p) => (p.$active ? "bold" : "normal")};
  line-height: 14px;
  &::before {
    content: "";
    position: absolute;
    inset: 0 2px;
    z-index: -1;
    border: solid #000;
    border-width: 0 1px 1px;
    background: ${(p) => (p.$active ? "#000" : FACE)};
    transform: skewX(${(p) => (p.$active ? 14 : -14)}deg);
  }
`;

/* ---------- command line and status bar ---------- */

const CommandArea = styled.section`
  display: flex;
  gap: 2px;
  height: 67px;
  padding: 5px 8px 1px 6px;
  border-top: 1px solid #000;
`;

const CommandGrip = styled.span`
  width: 8px;
  border: solid ${SHADOW};
  border-width: 0 1px;
  box-shadow: inset 1px 0 #fff, inset -3px 0 #fff;
`;

const CommandBox = styled.div`
  flex: 1;
  display: flex;
  flex-direction: column;
  border: 1px solid #000;
  border-width: 1px 0 0 2px;
  background: #fff;
  font-size: 13px;
  line-height: 14px;
  ${Latin} { font-size: 14px; }
`;

const History = styled.div`
  display: flex;
  flex: 1;
  border-bottom: 1px solid #85837a;
`;

const Log = styled.ol`
  flex: 1;
  margin: 0;
  padding: 0;
  list-style: none;
`;

const LogLine = styled.li`
  height: 14px;
  white-space: pre;
`;

const Prompt = styled.div`
  display: flex;
  align-items: center;
  height: 16px;
`;

const PromptInput = styled.input`
  flex: 1;
  border: 0;
  outline: 0;
  font-size: 14px;
`;

const StatusBar = styled.footer`
  display: flex;
  align-items: center;
  gap: 2px;
  height: 26px;
  padding: 2px 4px 1px 5px;
  border-top: 1px solid ${SHADOW};
  border-bottom: 4px solid #3b70db;
`;

const Coordinates = styled.output`
  width: 250px;
  height: 19px;
  padding: 1px 0 0;
  margin-right: 1px;
  border: 1px solid;
  border-color: ${SHADOW} #fff #fff ${SHADOW};
  font-size: 11px;
  line-height: 17px;
`;

const StatusToggle = styled.button`
  height: 19px;
  padding: 2px 2px 0;
  border: 1px solid;
  border-color: ${(p) => (p.$on ? "#55534a #fff #fff #55534a" : `#fff ${SHADOW} ${SHADOW} #fff`)};
  background: ${(p) => (p.$on ? "#f3f1e6" : FACE)};
  white-space: nowrap;
`;

const Tray = styled.div`
  display: flex;
  align-items: center;
  gap: 8px;
  margin-left: auto;
`;

/* ---------- dialog ---------- */

const DialogWindow = styled.section`
  position: absolute;
  left: 236px;
  top: 157px;
  width: 552px;
  border: solid #0a45d8;
  border-width: 0 4px 4px;
  border-radius: 7px 7px 0 0;
  background: #0a45d8;
`;

const DialogTitle = styled.header`
  display: flex;
  align-items: center;
  gap: 3px;
  height: 30px;
  margin: 0 -4px;
  padding: 1px 5px 0;
  border-radius: 7px 7px 0 0;
  background: linear-gradient(#0a4fd2, #3a8cff 3px, #0a5ae8 8px, #0560f4 60%, #0466fb 85%, #0a45d8);
  color: #fff;
  text-shadow: 1px 1px #0f2f85;
  h2 { flex: 1; margin: 0 0 0 1px; font-size: 13px; }
  ${Latin} { font-size: 13px; }
`;

const DialogBody = styled.div`
  padding: 9px 9px 4px 5px;
  background: ${FACE};
`;

const TabList = styled.div`
  display: flex;
  align-items: flex-end;
  gap: 1px;
  height: 21px;
  padding-left: 2px;
`;

const Tab = styled.button`
  width: ${(p) => p.$width}px;
  height: 18px;
  padding: 1px 5px 0;
  border: 1px solid #919b9c;
  border-bottom: 0;
  border-radius: 3px 3px 0 0;
  background: linear-gradient(#fff, #ecebe5);
  text-align: left;
  white-space: nowrap;
  ${(p) => p.$active && css`
    height: 21px;
    margin: 0 -1px -1px;
    padding: 0 6px;
    border-top: 3px solid #f5a52c;
    background: #fbfaf7;
    z-index: 1;
  `}
`;

const TabPage = styled.div`
  display: flex;
  gap: 19px;
  padding: 3px 4px 10px 6px;
  border: 1px solid #919b9c;
  background: ${FACE};
`;

const Group = styled.fieldset`
  display: flex;
  flex-direction: column;
  gap: ${(p) => p.$gap || 0}px;
  min-width: 0;
  margin: 0;
  padding: ${(p) => p.$pad};
  border: 1px solid #d0d0bf;
  border-radius: 4px;
`;

const Legend = styled.legend`
  margin-left: ${(p) => p.$indent || 0}px;
  padding: 0 2px 0 0;
  color: #0a3fb8;
  line-height: 14px;
`;

const LeftColumn = styled.div`
  width: 237px;
`;

const RightColumn = styled.div`
  display: flex;
  flex-direction: column;
  flex: 1;
  gap: 8px;
  padding-top: 7px;
`;

const FieldStack = styled.div`
  display: flex;
  flex-direction: column;
  gap: ${(p) => p.$gap}px;
`;

const Field = styled.div`
  display: flex;
  align-items: center;
  height: 20px;
  padding-left: ${(p) => p.$indent || 0}px;
`;

const FieldLabel = styled.label`
  flex: none;
  width: ${(p) => p.$width}px;
  padding-top: 1px;
`;

const CheckGrid = styled.div`
  display: grid;
  grid-template-columns: 110px 1fr;
  gap: 6px 0;
`;

const Preview = styled.svg`
  width: 262px;
  height: 153px;
  border: solid;
  border-width: 3px 1px 1px 3px;
  border-color: #8f8d80 #fff #fff #8f8d80;
  background: #000;
`;

const Footer = styled.div`
  display: flex;
  justify-content: flex-end;
  gap: 23px;
  padding-top: 6px;
`;

const PushButton = styled.button`
  width: 73px;
  height: 20px;
  padding-top: 2px;
  border: 1px solid #003c74;
  border-radius: 3px;
  background: linear-gradient(#fff, #f3f2ec 80%, #dcd8cc);
  box-shadow: ${(p) => (p.$primary ? "inset 0 0 0 2px #a9c3f2" : "none")};
`;

const Annotation = styled.svg`
  position: absolute;
  left: 100px;
  top: 263px;
  pointer-events: none;
`;

function DimensionPreview() {
  return (
    <Preview viewBox="0 0 258 149" fill="none" stroke="#fff" role="img" aria-label="preview">
      <g stroke="#cfc48c">
        <path d="M80.500 107V55.500h42v10h42l41 74h-93l-15-5-12-12z" />
        <circle cx="113.500" cy="105.500" r="21" />
      </g>
      <path d="M113.500 101v9M109 105.500h9M80.500 26v27M122.500 26v27M80.500 34.500H131M51 55.500h27M51 105.500h27M58.500 57v15M58.500 88v16" />
      <path d="M166 64l29-17M208 138l30-16M188 51l18 30M212 93l17 31M164 105l13-12M156 120l-5 17M77 143.500h7l8-9" />
      <g fill="#fff" stroke="none">
        <path d="M58.500 56l-2 6h4zM58.500 105l-2-6h4zM188 51l1 7 3-2zM229 124l-5-5 4-2zM177 93l-6 3 3 3zM92 134l-6 3 3 3z" />
        <g fontFamily="Liberation Sans, sans-serif" fontSize="12">
          <text x="133" y="39">25.8039</text>
          <text x="36" y="85">30.3657</text>
          <text x="187" y="92">51.3269</text>
          <text x="148" y="116">60°</text>
          <text x="19" y="147">R20.4355</text>
        </g>
      </g>
    </Preview>
  );
}

const TABS = [["直线和箭头", 71], ["文字", 47], ["调整", 46], ["主单位", 52], ["换算单位", 57], ["公差", 46]];

function LinearGroup() {
  return (
    <LeftColumn>
      <Group $gap={2} $pad="2px 6px 4px 5px">
        <Legend $indent={2}>线性标注</Legend>
        <FieldStack $gap={6}>
          <Field $indent={2}>
            <FieldLabel $width={114} htmlFor="unit"><Caption text="单位格式(&U):" /></FieldLabel>
            <Combo id="unit" width={108} value="小数" />
          </Field>
          <Field $indent={2}>
            <FieldLabel $width={114} htmlFor="precision"><Caption text="精度(&P):" /></FieldLabel>
            <Combo id="precision" width={108} value="0.0000" latin />
          </Field>
          <Field $indent={2}>
            <FieldLabel $width={114} htmlFor="fraction"><Caption text="分数格式(&M):" /></FieldLabel>
            <Combo id="fraction" width={108} value="水平" disabled />
          </Field>
          <Field $indent={2}>
            <FieldLabel $width={114} htmlFor="separator"><Caption text="小数分隔符(&C):" /></FieldLabel>
            <Combo id="separator" width={108} value="'.' (句点)" />
          </Field>
          <Field $indent={2}>
            <FieldLabel $width={114} htmlFor="round"><Caption text="舍入(&R):" /></FieldLabel>
            <NumberBox id="round" width={92} initial="0.0000" />
          </Field>
          <Field $indent={2}>
            <FieldLabel $width={63} htmlFor="prefix"><Caption text="前缀(&X):" /></FieldLabel>
            <TextBox id="prefix" $width={156} />
          </Field>
          <Field $indent={2}>
            <FieldLabel $width={63} htmlFor="suffix"><Caption text="后缀(&S):" /></FieldLabel>
            <TextBox id="suffix" $width={156} />
          </Field>
        </FieldStack>
        <div>
          <Group $gap={5} $pad="2px 4px 3px 7px">
            <Legend>测量单位比例</Legend>
            <Field>
              <FieldLabel $width={108} htmlFor="factor"><Caption text="比例因子(&E):" /></FieldLabel>
              <NumberBox id="factor" width={89} initial="25.4000" />
            </Field>
            <Check text="仅应用到布局标注" />
          </Group>
          <Group $pad="2px 4px 4px 8px">
            <Legend>消零</Legend>
            <CheckGrid>
              <Check text="前导(&L)" />
              <Check text="0 英尺(&F)" disabled checked />
              <Check text="后续(&T)" />
              <Check text="0 英寸(&I)" disabled checked />
            </CheckGrid>
          </Group>
        </div>
      </Group>
    </LeftColumn>
  );
}

function AngularGroup() {
  return (
    <Group $gap={10} $pad="15px 4px 4px 6px">
      <Legend $indent={1}>角度标注</Legend>
      <Field $indent={1}>
        <FieldLabel $width={99} htmlFor="angle-unit"><Caption text="单位格式(&A):" /></FieldLabel>
        <Combo id="angle-unit" width={147} value="十进制度数" />
      </Field>
      <Field $indent={1}>
        <FieldLabel $width={99} htmlFor="angle-precision"><Caption text="精度(&O):" /></FieldLabel>
        <Combo id="angle-precision" width={147} value="0" latin />
      </Field>
      <Group $pad="3px 4px 1px 6px">
        <Legend $indent={1}>消零</Legend>
        <FieldStack $gap={4}>
          <Check text="前导(&D)" />
          <Check text="后续(&N)" />
        </FieldStack>
      </Group>
    </Group>
  );
}

function DimensionDialog() {
  const [tab, setTab] = useState("主单位");
  return (
    <DialogWindow role="dialog" aria-label="修改标注样式">
      <DialogTitle>
        <Icon name="acad" />
        <h2><Caption text="修改标注样式: Standard" /></h2>
        <WindowButton aria-label="help">
          <svg width="12" height="16">{letter("?", 2, 13, 14, "#fff")}</svg>
        </WindowButton>
        <WindowButton $tone="red" aria-label="close">
          <svg width="12" height="12"><path d="M2 2l8 8M10 2l-8 8" stroke="#fff" strokeWidth="2" /></svg>
        </WindowButton>
      </DialogTitle>
      <DialogBody>
        <TabList role="tablist">
          {TABS.map(([name, width]) => (
            <Tab key={name} role="tab" $width={width} $active={name === tab} onClick={() => setTab(name)}>{name}</Tab>
          ))}
        </TabList>
        <TabPage>
          <LinearGroup />
          <RightColumn>
            <DimensionPreview />
            <AngularGroup />
          </RightColumn>
        </TabPage>
        <Footer>
          <PushButton $primary>确定</PushButton>
          <PushButton>取消</PushButton>
          <PushButton><Caption text="帮助(&H)" /></PushButton>
        </Footer>
      </DialogBody>
      <Annotation width="160" height="52" fill="none" stroke="#b8222c">
        <path d="M28 6H7c2 10 14 22 24 29 10 6 22 8 34 11h60c12 0 28-3 29-8 0-12-8-20-20-28-4-3-10-6-16-7H46L14 9" />
      </Annotation>
    </DialogWindow>
  );
}

/* ---------- page ---------- */

const MENUS = [
  "文件(&F)", "编辑(&E)", "视图(&V)", "插入(&I)", "格式(&O)", "工具(&T)",
  "绘图(&D)", "标注(&N)", "修改(&M)", "E&xpress", "窗口(&W)", "帮助(&H)",
];

const TOGGLES = [
  ["捕捉"], ["栅格"], ["正交", true], ["极轴"], ["对象捕捉", true], ["对象追踪"], ["线宽"], ["模型", true],
];

const LOG = [
  "命令: _.undo 输入要放弃的操作数目或",
  "[自动(A)/控制(C)/开始(BE)/结束(E)/标记(M)/后退(B)] <1>: 1 标注样式 GROUP",
  "命令: '_dimstyle",
];

const NAV = { first: "M1 1v8M8 1v8L3 5z", prev: "M7 1v8L2 5z", next: "M3 1v8l5-4z", last: "M9 1v8M2 1v8l5-4z" };

const COLUMNS = {
  modify: "erase copyobj mirror offset array move rotate scale stretch lengthen trim extend breakpt breakobj chamfer fillet explode refedit solids boolean measure",
  draw: "line xline mline pline polygon rectangle arc circle cloud spline ellipse ellarc donut insblock mkblock point hatch region mtext divide measuren",
  solidedit: "union subtract intersect | extrude movef offsetf deletef rotatef taperf copyf colorf | copyedge coloredge | imprint clean separate shell check",
  solids: "box sphere cylinder cone wedge torus | extrude revolve | slice section interfere | setupdraw setupview setupprof",
  text: "textfit textmask textexplode arctext",
  snap: "trackpt snapfrom | endpt midpt inter appint ext | centerp quadrant tangent | perp parallel insert node | nearest snapnone | snapset",
};

function SideColumn({ sets }) {
  return (
    <ToolColumn>
      {sets.map((set) => (
        <ToolGroup key={set} $vertical>
          <Grip $vertical />
          <Tools names={COLUMNS[set]} vertical />
        </ToolGroup>
      ))}
    </ToolColumn>
  );
}

export default function App() {
  return (
    <Desktop>
      <GlobalStyle />
      <TitleBar>
        <Logo>a</Logo>
        <AppTitle>AutoCAD 2004 - [Drawing1.dwg]</AppTitle>
        <WindowButton aria-label="minimize"><svg width="12" height="12"><path d="M1 9h6" stroke="#fff" strokeWidth="3" /></svg></WindowButton>
        <WindowButton aria-label="maximize"><svg width="12" height="12" fill="none" stroke="#fff"><path d="M1 2h10" strokeWidth="3" /><path d="M1.500 2v9h9V2" /></svg></WindowButton>
        <WindowButton $tone="dim" aria-label="close"><svg width="12" height="12"><path d="M1 1l10 10M11 1L1 11" stroke="#fff" strokeWidth="2" /></svg></WindowButton>
      </TitleBar>
      <MenuBar>
        <Icon name="acad" />
        {MENUS.map((m) => <MenuItem key={m}><Caption text={m} /></MenuItem>)}
        <MdiButtons>
          <MdiButton aria-label="minimize drawing"><svg width="12" height="12"><path d="M2 10h6" stroke="#b9b6a8" strokeWidth="2" /></svg></MdiButton>
          <MdiButton aria-label="restore drawing"><svg width="12" height="12" fill="none" stroke="#b9b6a8"><path d="M3.500 4V1.500h7v6H8M.5 4.500h7v6h-7zM1 6h6" /></svg></MdiButton>
          <MdiButton aria-label="close drawing"><svg width="12" height="12"><path d="M2 2l7 8M9 2l-7 8" stroke="#b9b6a8" strokeWidth="2" /></svg></MdiButton>
        </MdiButtons>
      </MenuBar>
      <Toolbars>
        <ToolRow>
          <ToolGroup>
            <Grip />
            <Tools names="new open save | print preview publish | cut copy paste brush | undo drop redo drop | pan zoom zoomwin viewcube zoomprev props design palettes | help" />
          </ToolGroup>
          <ToolGroup>
            <Grip />
            <Tools names="textstyle" />
            <Combo width={100} value="Standard" disabled latin />
            <Tools names="| dimstyle" />
            <Combo width={100} value="Standard" disabled latin />
          </ToolGroup>
          <ToolGroup $grow>
            <Grip />
            <Tools names="ucs ucsorigin |" />
            <Combo width={160} value="世界" disabled><Icon name="globe" /></Combo>
          </ToolGroup>
        </ToolRow>
        <ToolRow>
          <ToolGroup>
            <Grip />
            <Tools names="layers" />
            <Combo width={299} value="0" disabled latin>
              <Icon name="bulb" /><Icon name="sun" /><Icon name="vpsun" /><Icon name="lock" /><Swatch />
            </Combo>
            <Tools names="layercur layerprev broom" />
          </ToolGroup>
          <ToolGroup>
            <Grip />
            <Combo width={148} value="ByLayer" disabled latin><Swatch /></Combo>
            <Separator />
            <Combo width={160} value="ByLayer" disabled latin><LineSample $width={60} /></Combo>
            <Separator />
            <Combo width={124} value="ByLayer" disabled latin><LineSample $width={35} /></Combo>
            <Separator />
            <Combo width={120} value="ByColor" disabled latin />
          </ToolGroup>
        </ToolRow>
        <ToolRow>
          <ToolGroup>
            <Grip />
            <Tools names="dimlinear dimaligned dimord | radius diameter angle | quickdim baseline contin | leader tolerance center | oblique dimtext dimrot dimedit dimpencil dimupdate |" />
            <Combo width={99} value="Standard" disabled latin />
            <Tools names="dimstyle" />
          </ToolGroup>
          <ToolGroup>
            <Grip />
            <Tools names="order | hatchedit pedit splineedit | tag tagedit tagshape tagsync tagarrow" />
          </ToolGroup>
          <ToolGroup>
            <Grip />
            <Tools names="wf2d wf3d hidden shadebox flat gouraud flatedge gouraudedge" />
          </ToolGroup>
        </ToolRow>
      </Toolbars>

      <Workspace>
        <SideColumn sets={["modify"]} />
        <SideColumn sets={["draw"]} />
        <Stage>
          <Viewport>
            <Canvas fill="none" stroke="#fff">
              <path d="M55.500 331v46M54.500 377v90M53.500 467v54M249.500 440v90M439.500 440v90" />
              <path d="M10.500 499.500h10v10h-10zM15.500 499v-45M21 504.500h48M66 500v9l12-4.500zM11.500 454h9l-5-12z" />
              <path d="M66 504h9M15.500 444v10" stroke="#999" />
              <path d="M12 422l5 6 5-6M17 428v7M87 499l10 11M97 499l-10 11" />
            </Canvas>
            <ScrollTrack $vertical>
              <ScrollButton aria-label="scroll up"><Chevron dir="up" /></ScrollButton>
              <ScrollButton aria-label="scroll down"><Chevron /></ScrollButton>
            </ScrollTrack>
            <FloatingPalette side="left" height={402} title="特性" />
            <FloatingPalette side="right" height={491} title="工具选项板" />
          </Viewport>
          <LayoutBar>
            {Object.entries(NAV).map(([name, d]) => (
              <NavButton key={name} aria-label={name}>
                <svg width="10" height="10"><path d={d} fill="#000" stroke="#000" /></svg>
              </NavButton>
            ))}
            <LayoutTabs>
              <LayoutTab $active>模型</LayoutTab>
              <LayoutTab><Caption text="布局1" /></LayoutTab>
              <LayoutTab><Caption text="布局2" /></LayoutTab>
            </LayoutTabs>
            <ScrollTrack $length={291}>
              <ScrollButton aria-label="scroll left"><Chevron dir="left" /></ScrollButton>
              <Thumb $offset={55} />
              <ScrollButton aria-label="scroll right"><Chevron dir="right" /></ScrollButton>
            </ScrollTrack>
          </LayoutBar>
        </Stage>
        <SideColumn sets={["solidedit"]} />
        <SideColumn sets={["solids", "text"]} />
        <SideColumn sets={["snap"]} />
      </Workspace>

      <CommandArea>
        <CommandGrip />
        <CommandBox>
          <History>
            <Log>
              {LOG.map((line) => <LogLine key={line}><Caption text={line} /></LogLine>)}
            </Log>
            <ScrollTrack $vertical>
              <ScrollButton aria-label="older"><Chevron dir="up" /></ScrollButton>
              <ScrollButton aria-label="newer"><Chevron /></ScrollButton>
            </ScrollTrack>
          </History>
          <Prompt>
            <label htmlFor="command"><Caption text="命令:" /></label>
            <PromptInput id="command" />
            <ScrollTrack $length={66}>
              <ScrollButton aria-label="left"><Chevron dir="left" /></ScrollButton>
              <Thumb $offset={1} />
              <ScrollButton aria-label="right"><Chevron dir="right" /></ScrollButton>
            </ScrollTrack>
          </Prompt>
        </CommandBox>
      </CommandArea>
      <StatusBar>
        <Coordinates>6.6262, 7.2882, 0.0000</Coordinates>
        {TOGGLES.map(([name, on]) => <StatusToggle key={name} $on={on}>{name}</StatusToggle>)}
        <Tray>
          <Icon name="tray" />
          <svg width="8" height="5"><path d="M0 0h8L4 5z" fill="#000" /></svg>
          <svg width="12" height="12"><path d="M1 12L12 1M5 12l7-7M9 12l3-3" stroke={SHADOW} strokeWidth="2" /></svg>
        </Tray>
      </StatusBar>

      <DimensionDialog />
    </Desktop>
  );
}
